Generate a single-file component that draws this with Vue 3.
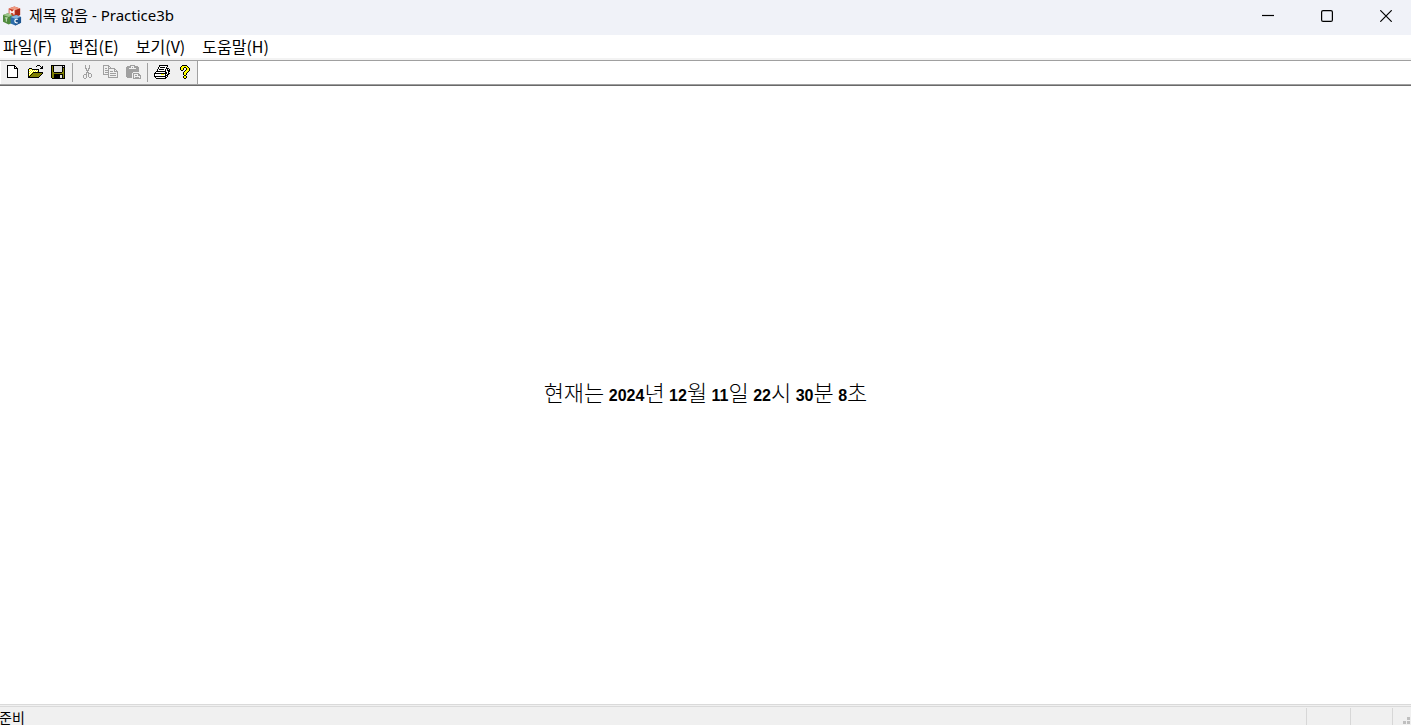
<template>
  <div class="window">
    <header class="title-bar">
      <svg class="app-icon" viewBox="0 0 20 20" aria-hidden="true">
        <path d="M6 2l6-2 6 2v7l-6 2-6-2z" fill="#c93a22" />
        <path d="M6 2l6-2 6 2-5 2z" fill="#ee9a82" />
        <path d="M13 4l5-2v7l-5 2z" fill="#a82a18" />
        <path d="M0 9l5-2 5 2v8l-4 2-6-3z" fill="#4f8a3c" />
        <path d="M0 9l5-2 5 2-4 2z" fill="#9cc48a" />
        <path d="M8 11l6-2 5 2v6l-6 3-5-2z" fill="#2c6cab" />
        <path d="M8 11l6-2 5 2-6 2z" fill="#86b8e0" />
        <path d="M13 13l6-2v6l-6 3z" fill="#1d5490" />
        <path d="M7.500 8.500v-4l2 2 2-2v4" fill="none" stroke="#fff" stroke-width="1.300" />
        <path d="M2 12h3M3.500 12v4" fill="none" stroke="#d5e8cb" stroke-width="1" />
        <path d="M15.500 13.500q-3-.5-3 1.800t3 1.800" fill="none" stroke="#fff" stroke-width="1.300" />
      </svg>
      <h1 class="title">제목 없음 - Practice3b</h1>
      <div class="window-controls">
        <button type="button" aria-label="최소화">
          <svg viewBox="0 0 12 12"><path d="M0 5.500h12" /></svg>
        </button>
        <button type="button" aria-label="최대화">
          <svg viewBox="0 0 12 12"><rect x="0.600" y="0.600" width="10.800" height="10.800" rx="1.500" /></svg>
        </button>
        <button type="button" aria-label="닫기">
          <svg viewBox="0 0 12 12"><path d="M0.300 0.300l11.400 11.400M11.700 0.300L0.300 11.700" /></svg>
        </button>
      </div>
    </header>

    <nav class="menu-bar">
      <button v-for="menu in menus" :key="menu" type="button">{{ menu }}</button>
    </nav>

    <div class="tool-row">
      <div class="toolbar" role="toolbar">
        <template v-for="tool in tools" :key="tool.name">
          <span v-if="tool.separated" class="separator"></span>
          <button type="button" :aria-label="tool.name" :disabled="tool.disabled">
            <svg viewBox="0 0 17 14" shape-rendering="crispEdges">
              <rect
                v-for="p in pixels(tool)"
                :key="p.x + '-' + p.y"
                :x="p.x"
                :y="p.y"
                width="1"
                height="1"
                :fill="p.color"
              />
            </svg>
          </button>
        </template>
      </div>
    </div>

    <main class="view">
      <p class="clock">
        현재는<b> 2024</b>년<b> 12</b>월<b> 11</b>일<b> 22</b>시<b> 30</b>분<b> 8</b>초
      </p>
    </main>

    <footer class="status-bar">
      <span class="status-text">준비</span>
      <span class="pane pane-caps"></span>
      <span class="pane pane-num"></span>
      <span class="pane pane-grip">
        <svg viewBox="0 0 8 8" shape-rendering="crispEdges" aria-hidden="true">
          <path d="M4 0h3v3h-3zM0 4h3v3h-3zM4 4h3v3h-3z" fill="#bfbfbf" />
        </svg>
      </span>
    </footer>
  </div>
</template>

<script setup>
const menus = ['파일(F)', '편집(E)', '보기(V)', '도움말(H)']

const palette = {
  '#': '#000000',
  W: '#ffffff',
  y: '#ffff00',
  o: '#808000',
  s: '#e0e0e0',
  g: '#a0a0a0',
}

// 툴바 비트맵, left는 버튼 안에서의 시작 열
const tools = [
  {
    name: '새로 만들기',
    left: 3,
    rows: [
      '########',
      '#WWWWWW##',
      '#WWWWWW#W#',
      '#WWWWWW####',
      '#WWWWWWWWW#',
      '#WWWWWWWWW#',
      '#WWWWWWWWW#',
      '#WWWWWWWWW#',
      '#WWWWWWWWW#',
      '#WWWWWWWWW#',
      '#WWWWWWWWW#',
      '#WWWWWWWWW#',
      '###########',
    ],
  },
  {
    name: '열기',
    left: 1,
    rows: [
      '.........###',
      '........#...#.#',
      '.............##',
      '.###........###',
      '#yWy#######',
      '#WyWyWyWyW#',
      '#yWyWyWyWy#',
      '#WyWy##########',
      '#yWy#ooooooooo#',
      '#Wy#ooooooooo#',
      '#y#ooooooooo#',
      '##ooooooooo#',
      '###########',
    ],
  },
  {
    name: '저장',
    left: 1,
    rows: [
      '##############',
      '#o#ssssssss#s#',
      '#o#ssssssss###',
      '#o#ssssssss#o#',
      '#o#ssssssss#o#',
      '#o#ssssssss#o#',
      '#o#ssssssss#o#',
      '#oo########oo#',
      '#oooooooooooo#',
      '#oo#########o#',
      '#oo######ss#o#',
      '#oo######ss#o#',
      '#oo######ss#o#',
      '.#############',
    ],
  },
  {
    name: '잘라내기',
    left: 4,
    disabled: true,
    separated: true,
    rows: [
      '..g...g',
      '..g...g',
      '..g...g',
      '..gg.gg',
      '...g.g',
      '...ggg',
      '....g',
      '...ggg',
      '...g.ggg',
      '.ggg.g..g',
      'g..g.g..g',
      'g..g.g..g',
      'g..g..gg',
      '.gg',
    ],
  },
  {
    name: '복사',
    left: 1,
    disabled: true,
    rows: [
      'gggggg',
      'g....gg',
      'g....g.g',
      'g.gg.ggggggg',
      'g....g.....gg',
      'g.gggg.....g.g',
      'g....g.ggg.gggg',
      'g.gggg........g',
      'g....g.gggggg.g',
      'gggggg........g',
      '.....g.gggggg.g',
      '.....g........g',
      '.....gggggggggg',
    ],
  },
  {
    name: '붙여넣기',
    left: 1,
    disabled: true,
    rows: [
      '....ggggg',
      '.gggg...gggg',
      'ggggg.g.ggggg',
      'ggg.......ggg',
      'ggggggggggggg',
      'ggggggggggggg',
      'ggggggggggggg',
      'ggggggg......',
      'gggggg.gggggg',
      'gggggg.g....gg',
      'gggggg.g.gg.ggg',
      'gggggg.g......g',
      '.ggggg.g.gggg.g',
      '.......gggggggg',
    ],
  },
  {
    name: '인쇄',
    left: 0,
    separated: true,
    rows: [
      '.....#########',
      '.....#WWWWWWW#',
      '....#W#####W#',
      '....#WWWWWWW###',
      '...#W#####W#W#.#',
      '...#WWWWWWW#W###',
      '..##########WW##',
      '.#WWWWWWWWW##W#',
      '#############W##',
      '#WWWWWWyyyW#W##',
      '#WWWWWWWWWW###',
      '############W#',
      '.#WWWWWWWWW##',
      '..##########',
    ],
  },
  {
    name: '정보',
    left: 3,
    rows: [
      '..#####',
      '.#yyyyy#',
      '#yyy##yy#',
      '#yy#..#yy#',
      '#yy#..#yy#',
      '.##..#yyy#',
      '....#yyy#',
      '...#yyy#',
      '...#yy#',
      '...#yy#',
      '....##',
      '...#yy#',
      '...#yy#',
      '....##',
    ],
  },
]

function pixels(tool) {
  const list = []
  tool.rows.forEach((row, y) => {
    ;[...row].forEach((c, x) => {
      if (palette[c]) list.push({ x: x + tool.left, y, color: palette[c] })
    })
  })
  return list
}
</script>

<style>
body {
  margin: 0;
  background: #fff;
}
</style>

<style scoped>
.window {
  display: flex;
  flex-direction: column;
  height: 100vh;
  overflow: hidden;
  color: #000;
  background: #fff;
  font-family: 'Noto Sans CJK KR', sans-serif;
  font-size: 16px;
}

button {
  padding: 0;
  border: 0;
  background: transparent;
  color: inherit;
  font: inherit;
}

.title-bar {
  display: flex;
  align-items: center;
  height: 35px;
  flex: none;
  padding-left: 3px;
  background: #f0f2f8;
}

.app-icon {
  width: 19px;
  height: 20px;
  margin-bottom: 4px;
}

.title {
  margin: 0 0 5px 7px;
  font-family: 'Noto Sans', 'Noto Sans CJK KR', sans-serif;
  font-size: 15px;
  font-weight: 400;
  line-height: 20px;
}

.window-controls {
  display: flex;
  gap: 9px;
  align-self: stretch;
  margin-left: auto;
}

.window-controls button {
  display: flex;
  align-items: center;
  justify-content: center;
  width: 50px;
  padding-bottom: 3px;
}

.window-controls svg {
  width: 12px;
  height: 12px;
  fill: none;
  stroke: #000;
  stroke-width: 1.2;
}

.menu-bar {
  display: flex;
  flex: none;
  gap: 17px;
  height: 23px;
  padding-left: 3px;
  border-bottom: 2px solid #f3f3f3;
}

.menu-bar button {
  line-height: 23px;
}

.tool-row {
  display: flex;
  flex: none;
  height: 23px;
  border-top: 1px solid #a0a0a0;
  border-bottom: 1px solid #a0a0a0;
}

.toolbar {
  display: flex;
  align-items: center;
  margin-left: 1px;
  border-right: 1px solid #a0a0a0;
  background: #f0f0f0;
}

.toolbar button {
  display: flex;
  width: 23px;
  padding-left: 3px;
}

.toolbar svg {
  width: 17px;
  height: 14px;
  margin-bottom: 1px;
}

.separator {
  width: 1px;
  height: 19px;
  margin: 0 3px 0 2px;
  background: #a0a0a0;
}

.view {
  display: flex;
  flex: 1;
  align-items: center;
  justify-content: center;
  border-top: 1px solid #696969;
}

.clock {
  margin: 0;
  font-family: 'Liberation Sans', 'Noto Sans CJK KR', sans-serif;
  font-size: 22px;
  font-weight: 300;
  line-height: 24px;
}

.clock b {
  font-size: 16px;
  font-weight: 700;
}

.status-bar {
  display: flex;
  flex: none;
  height: 18px;
  border-top: 3px double #dadada;
  background: #f0f0f0;
}

.status-text {
  flex: 1;
  margin-left: -1px;
  font-size: 14px;
  line-height: 20px;
}

.pane {
  box-sizing: border-box;
  margin-top: 1px;
  border-left: 1px solid #d7d7d7;
}

.pane-caps {
  width: 44px;
}

.pane-num {
  width: 42px;
}

.pane-grip {
  display: flex;
  align-items: flex-end;
  justify-content: flex-end;
  width: 19px;
}

.pane-grip svg {
  width: 8px;
  height: 8px;
}
</style>
